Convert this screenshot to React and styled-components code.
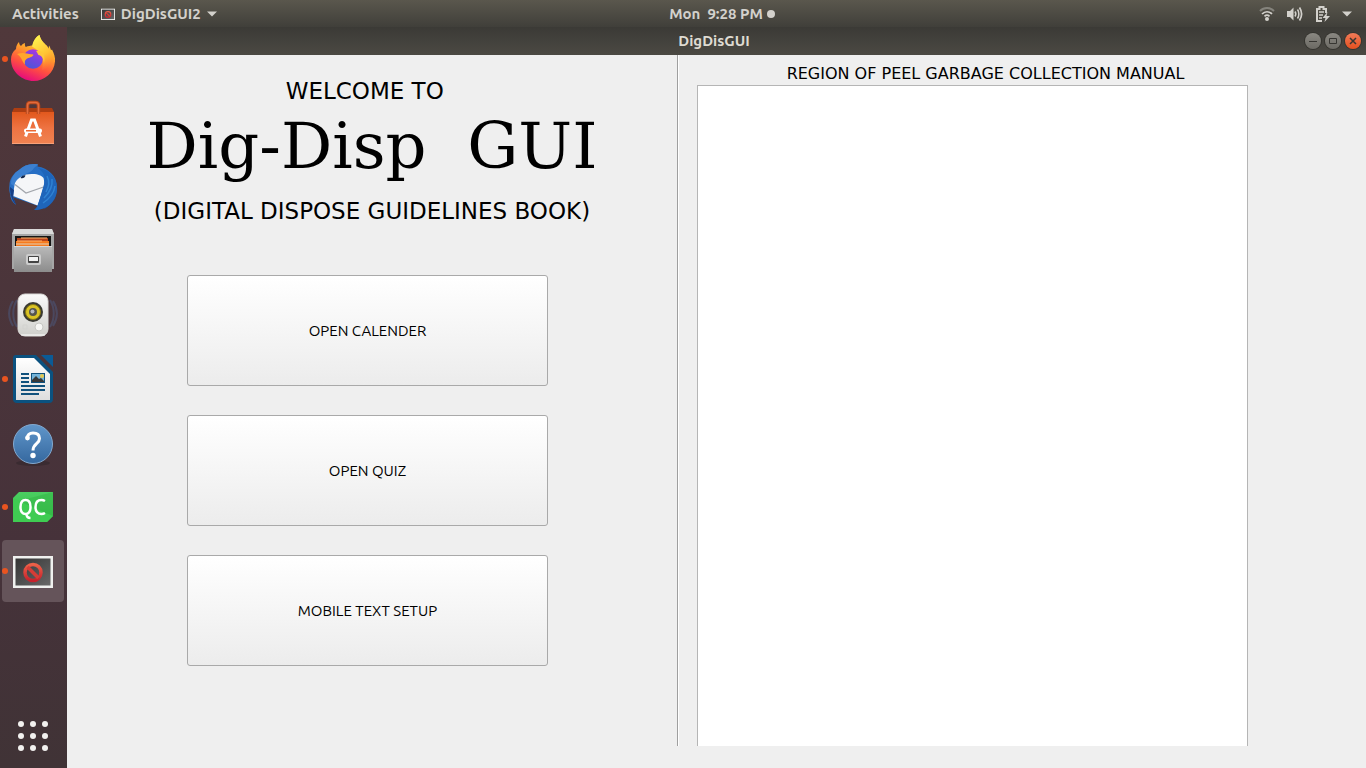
import React from "react";
import styled, { createGlobalStyle } from "styled-components";

const uiFont = `Ubuntu, "Noto Sans", "Open Sans", sans-serif`;
const formFont = `"DejaVu Sans", sans-serif`;

const GlobalStyle = createGlobalStyle`
  *, *::before, *::after { box-sizing: border-box; }
  body { margin: 0; background: #efefef; }
`;

const Desktop = styled.div`
  min-height: 100vh;
  display: flex;
  flex-direction: column;
  background: #efefef;
  font-family: ${uiFont};
`;

const TopBar = styled.header`
  height: 27px;
  flex: none;
  display: grid;
  grid-template-columns: 1fr auto 1fr;
  align-items: center;
  padding: 0 14px 0 12px;
  background: linear-gradient(#5a574d, #403f3a);
`;

const BarGroup = styled.div`
  display: flex;
  align-items: center;
  justify-content: ${(p) => (p.$end ? "flex-end" : "flex-start")};
  gap: ${(p) => p.$gap}px;
`;

const BarButton = styled.button`
  display: flex;
  align-items: center;
  gap: ${(p) => p.$gap || 0}px;
  padding: 0;
  border: 0;
  background: none;
  color: #d3d1cc;
  font: bold 15px/25px ${uiFont};
  white-space: pre;
  svg { display: block; }
`;

const Clock = styled(BarButton)`
  padding-left: 80px;
`;

const Workspace = styled.div`
  flex: 1;
  display: flex;
`;

const Dock = styled.nav`
  width: 67px;
  flex: none;
  display: flex;
  flex-direction: column;
  padding: 0 3px 0 2px;
  background: linear-gradient(#50383b, #46323a 70%, #403336);
`;

const DockItem = styled.button`
  position: relative;
  height: 62px;
  margin: 1px 0;
  padding: 0;
  border: 0;
  border-radius: 4px;
  display: flex;
  align-items: center;
  justify-content: center;
  background: ${(p) => (p.$active ? "#65545a" : "none")};
  svg { display: block; }
  &::before {
    content: "";
    display: ${(p) => (p.$running ? "block" : "none")};
    position: absolute;
    left: 0;
    top: 28px;
    width: 6px;
    height: 6px;
    border-radius: 50%;
    background: #e95420;
  }
`;

const AppsButton = styled(DockItem)`
  margin-top: auto;
`;

const Window = styled.main`
  flex: 1;
  min-width: 0;
  display: flex;
  flex-direction: column;
`;

const TitleBar = styled.div`
  height: 28px;
  flex: none;
  display: grid;
  grid-template-columns: 1fr auto 1fr;
  align-items: center;
  padding-right: 5px;
  background: linear-gradient(#3b3a36, #4b4943);
`;

const WindowTitle = styled.h1`
  grid-column: 2;
  margin: 0;
  color: #dfdbd2;
  font: bold 15px/28px ${uiFont};
`;

const WindowButtons = styled.div`
  display: flex;
  justify-content: flex-end;
  gap: 4px;
`;

const RoundButton = styled.button`
  width: 16px;
  height: 16px;
  padding: 0;
  border: 0;
  border-radius: 50%;
  color: #373632;
  background: ${(p) => (p.$close ? "linear-gradient(#f27b58, #e4501f)" : "linear-gradient(#8a8882, #6c6a64)")};
  box-shadow: 0 0 0 1px #35342f;
  svg { display: block; }
`;

const Content = styled.div`
  flex: 1;
  display: grid;
  grid-template-columns: 610fr 689fr;
  padding-bottom: 22px;
`;

const MenuPane = styled.section`
  min-width: 0;
  padding-top: 16px;
  color: #000;
  font-family: ${formFont};
  text-align: center;
`;

const Caption = styled.p`
  margin: 0;
  font-size: 23px;
  line-height: 40px;
  white-space: pre;
`;

const Brand = styled.h2`
  margin: 0 0 10px;
  font: 64px/70px "DejaVu Serif", serif;
  white-space: pre;
`;

const Actions = styled.div`
  display: flex;
  flex-direction: column;
  gap: 29px;
  margin: 44px 129px 0 120px;
`;

const ActionButton = styled.button`
  height: 111px;
  border: 1px solid #a9a9a9;
  border-radius: 3px;
  background: linear-gradient(#fff, #ececec);
  color: #000;
  font: 15px/20px ${uiFont};
`;

const ManualPane = styled.section`
  min-width: 0;
  display: flex;
  flex-direction: column;
  padding: 6px 118px 0 19px;
  border-left: 1px solid #9f9f9f;
  box-shadow: inset 1px 0 #fff;
`;

const ManualLabel = styled.label`
  margin-right: -26px;
  padding-top: 1px;
  color: #000;
  font: 16px/23px ${formFont};
  text-align: center;
`;

const ManualText = styled.textarea`
  flex: 1;
  display: block;
  width: 100%;
  padding: 4px;
  border: 1px solid #b5b5b5;
  border-bottom: 0;
  background: #fff;
  resize: none;
  outline: none;
  font: 16px/20px ${formFont};
`;

const Caret = () => (
  <svg width="10" height="6" viewBox="0 0 10 6"><path d="M0 .5h10L5 5.5z" fill="#d3d1cc" /></svg>
);

const Firefox = () => (
  <svg width="48" height="48" viewBox="0 1 48 48">
    <defs>
      <linearGradient id="ffBody" x1=".8" y1="0" x2=".4" y2="1">
        <stop offset="0" stopColor="#fff04a" /><stop offset=".4" stopColor="#ffa02b" />
        <stop offset=".7" stopColor="#ff5040" /><stop offset="1" stopColor="#e60c7c" />
      </linearGradient>
      <linearGradient id="ffTail" x1=".3" y1="0" x2=".7" y2="1">
        <stop offset="0" stopColor="#fff44f" /><stop offset=".6" stopColor="#ffc233" /><stop offset="1" stopColor="#ff8a2a" stopOpacity="0" />
      </linearGradient>
      <linearGradient id="ffGlobe" x1=".8" y1="0" x2=".3" y2="1">
        <stop offset="0" stopColor="#b833e1" /><stop offset=".5" stopColor="#7445e0" /><stop offset="1" stopColor="#4b57d8" />
      </linearGradient>
    </defs>
    <path d="M7 15c0-3 1.500-5.500 3-7 .2 2 .8 3 2 4 1-1.500 2.500-2.600 4-3-.3 1.600 0 3 .8 4 2.200-1 5-1.500 7.200-1.500C24 7 27 3 30.500 1c1 5 4 7.500 7 10.500 1 1.200 1.500 2.200 2 3.500l.5-3.500c1 1.300 1.500 3 2 4.700l1-.7c2 4 3.500 8 3 12C45 39 35.500 47 24.500 47S2 38 2 25.500c0-4.500 1.500-7.500 5-10.500z" fill="url(#ffBody)" />
    <path d="M23 12.500C24 7 27 3 30.500 1c1 5 4 7.500 7 10.500C42 17 44 23 41 30c-2 4-5 6-8 6 2-9 1-18-10-23.500z" fill="url(#ffTail)" />
    <circle cx="24" cy="25" r="9.800" fill="url(#ffGlobe)" />
    <path d="M8 20c4-1.500 8-1 11-.2 2 .5 4 .2 5.500 1-1 2.700-5 2.800-7 4.200-2 1.500-1.800 3.500-1.500 5.500C12.500 27 13 23 8 20z" fill="#ffa62b" />
    <path d="M27 17c6-1 10 4 8 12-.5-5-2.500-7.500-5.500-8-1-1.500-1.500-3-2.500-4z" fill="#ffc63a" />
  </svg>
);

const Software = () => (
  <svg width="48" height="48" viewBox="0 -1 48 48">
    <defs>
      <linearGradient id="bag" x1="0" y1="0" x2="0" y2="1">
        <stop offset="0" stopColor="#e2581d" /><stop offset=".5" stopColor="#ee7342" /><stop offset="1" stopColor="#f08352" />
      </linearGradient>
    </defs>
    <path d="M4 44h40l-2 2H6z" fill="#32272b" opacity=".6" />
    <path d="M5 8h38l2 4H3z" fill="#ad3e12" />
    <path d="M3 12h42v32H3z" fill="url(#bag)" />
    <path d="M3 43h42v1H3z" fill="#f8a179" />
    <path d="M18.500 14V5.500c0-2 1-3 3-3h5c2 0 3 1 3 3V14" fill="none" stroke="#b5471c" strokeWidth="3.500" />
    <path d="M18.500 14V5.500c0-2 1-3 3-3h5c2 0 3 1 3 3V14" fill="none" stroke="#e36b3c" strokeWidth="1.500" />
    <path d="M16.500 36.500 22.500 20h3l6 16.500" fill="none" stroke="#fff" strokeWidth="3" />
    <rect x="15" y="28.500" width="18" height="4.500" rx="2" fill="#fff" /><path d="M17 30h10v1.500H17z" fill="#eb6a35" />
  </svg>
);

const Thunderbird = () => (
  <svg width="48" height="48" viewBox="0 -1 48 48">
    <defs>
      <linearGradient id="bird" x1="0" y1="0" x2="1" y2="1">
        <stop offset="0" stopColor="#2c6cc0" /><stop offset=".6" stopColor="#2270c8" /><stop offset="1" stopColor="#123f88" />
      </linearGradient>
    </defs>
    <path d="M10 6C15 1 22-1 29 .5L28.500 2.500C39 4 48 12 48 23c0 6-1 9-3 13l-1-2c-1 5-5 9-9 11l1-3c-3 3-7 4-11 4l4-4L4 33l3 8C3 38 2 35 1 31l1 1C0 28 0 25 .5 20 1 14 5 9 10 6z" fill="url(#bird)" />
    <path d="M10 6C15 1 22-1 29 .5L25 4c-3 5-8 5-12 8-4 2-6 6-8 10l-3-2c0-6 3-11 8-14z" fill="#3c80d0" />
    <path d="M6 19c3-6 10-9.500 18-9 5 0 9 2 10.500 4 1 3 .7 6 .3 9L28.500 41.500 4.300 32C4.500 28 5 23 6 19z" fill="#f5f6f8" />
    <path d="m6 20.500 11 8.500 17.500-6" fill="none" stroke="#a2a6ac" strokeWidth="1.300" />
    <path d="m1 23 4 3-1 7 3 8C3 37 1 30 1 23z" fill="#183f85" />
    <path d="M29 4c7 5 8 11 5.500 18-2 6-3 12-6 20-1 2-2 3-3 4C40 46 48 36 48 24 48 13 39 5 29 4z" fill="#1f65ba" />
    <path d="M38 12c3 6 2 10-1 16m6-13c1 8-3 14-8 19m11-12c-1 8-6 13-12 17" fill="none" stroke="#3fa0ec" strokeWidth="1.500" opacity=".5" />
    <path d="M11.500 14c1-2 3-3 5-2.500-.5 2-2.500 3.500-5 2.500z" fill="#14284c" />
  </svg>
);

const Files = () => (
  <svg width="48" height="48" viewBox="0 0 48 48">
    <defs>
      <linearGradient id="drawer" x1="0" y1="0" x2="0" y2="1">
        <stop offset="0" stopColor="#bababa" /><stop offset="1" stopColor="#8c8c8c" />
      </linearGradient>
    </defs>
    <path d="M5 2h38l2 5v35H3V7z" fill="#a6a6a6" /><path d="M5 2h38l2 5H3z" fill="#dadada" />
    <path d="M6 9h36v11H6z" fill="#161616" />
    <path d="M8 11h31v9H8z" fill="#b9431b" /><path d="M7 14h33v6H7z" fill="#f57b20" />
    <path d="M12 11h26M8 14h25" stroke="#ffb46b" /><path d="M7 17h33" stroke="#e1d2b8" />
    <path d="M5 19h38v26H5z" fill="url(#drawer)" /><path d="M5 19h38v1H5z" fill="#d7d7d7" />
    <rect x="17" y="27" width="15" height="11" rx="2" fill="#ccc" />
    <rect x="19" y="29" width="11" height="7" rx="1" fill="#444" /><rect x="20" y="30" width="9" height="4" fill="#f3f3f3" />
  </svg>
);

const Speaker = () => (
  <svg width="50" height="48" viewBox="0 0 50 48">
    <defs>
      <linearGradient id="case" x1="0" y1="0" x2="0" y2="1">
        <stop offset="0" stopColor="#fafafa" /><stop offset="1" stopColor="#cfcfcb" />
      </linearGradient>
    </defs>
    <g fill="none" stroke="#4d6594" opacity=".4">
      <path d="M9 9c-5 8-5 19 0 27M5 10c-5 8-5 17 0 25" strokeWidth="2" />
      <path d="M42 9c5 8 5 19 0 27M45 10c5 8 5 17 0 25" strokeWidth="2" />
    </g>
    <rect x="10" y="3" width="30" height="42" rx="7" fill="url(#case)" stroke="#d9d9d6" />
    <path d="M13 44h24" stroke="#fff" />
    <circle cx="25" cy="21" r="10" fill="#3a3a33" />
    <circle cx="25" cy="21" r="7.500" fill="#dac324" stroke="#877810" />
    <circle cx="25" cy="21" r="4" fill="#55554d" /><circle cx="24.500" cy="20.500" r="2" fill="#b4b8be" />
    <circle cx="31" cy="36" r="4" fill="#f7f7f5" stroke="#c8c8c4" />
    <path d="M15 34h4v4h-4z" fill="none" stroke="#d2d2cf" />
  </svg>
);

const Writer = () => (
  <svg width="48" height="48" viewBox="0 0 48 48">
    <defs>
      <linearGradient id="page" x1="0" y1="0" x2="0" y2="1">
        <stop offset="0" stopColor="#fff" /><stop offset="1" stopColor="#dedede" />
      </linearGradient>
    </defs>
    <path d="M7 0h20l17 17v27a4 4 0 0 1-4 4H8a4 4 0 0 1-4-4V3a3 3 0 0 1 3-3z" fill="#0b5280" />
    <path d="M32 0h12v12z" fill="#0b5b96" />
    <path d="M7 3h18l16 16v26H7z" fill="url(#page)" />
    <path d="M12 19h8M12 23h8M12 27h8M12 31h24M12 35h24M12 39h18" stroke="#10517c" strokeWidth="2" />
    <path d="M22 18h14v10H22z" fill="#10517c" /><path d="M23 19h12v8H23z" fill="#75b4d9" />
    <circle cx="33" cy="21" r="2" fill="#e4c850" /><path d="m23 27 0-2 4-4 3 3 2-1 3 3v1z" fill="#383838" />
  </svg>
);

const Help = () => (
  <svg width="48" height="48" viewBox="0 -1 48 48">
    <defs>
      <linearGradient id="disc" x1="0" y1="0" x2="0" y2="1">
        <stop offset="0" stopColor="#6096ca" /><stop offset="1" stopColor="#35689f" />
      </linearGradient>
    </defs>
    <ellipse cx="24" cy="43" rx="17" ry="3" fill="#32272c" opacity=".6" />
    <circle cx="24" cy="24" r="19.500" fill="url(#disc)" stroke="#83a9cf" />
    <path d="M18 18.500c.5-4 3-5.500 6-5.500 4 0 6.500 2 6.500 5.500 0 5.500-6.500 5-6.500 12" fill="none" stroke="#fff" strokeWidth="3" />
    <circle cx="18.500" cy="18" r="2.400" fill="#fff" /><circle cx="24" cy="35.500" r="2.700" fill="#fff" />
  </svg>
);

const QtCreator = () => (
  <svg width="48" height="48" viewBox="0 0 48 48">
    <defs>
      <linearGradient id="qt" x1="0" y1="0" x2="0" y2="1">
        <stop offset="0" stopColor="#4bce61" /><stop offset="1" stopColor="#30bd43" />
      </linearGradient>
    </defs>
    <path d="M10 9h34v24l-6 6H4V15z" fill="url(#qt)" />
    <path d="m4 15 40 18-6 6H4z" fill="#3fcc52" /><path d="m10 18 34 15V9z" fill="#35b748" opacity=".6" />
    <path d="M16.500 17c3.700 0 5 2.500 5 7s-1.300 7-5 7-5-2.500-5-7 1.300-7 5-7zm1 14c0 3 1.500 4 4 4M36 18c-1-.6-2-1-3.500-1-4 0-6 2.500-6 7s2 7 6 7c1.500 0 2.500-.4 3.500-1" fill="none" stroke="#fff" strokeWidth="2.500" />
  </svg>
);

const DigDis = ({ width = 40, height = 34 }) => (
  <svg width={width} height={height} viewBox="0 -2 40 34" preserveAspectRatio="none">
    <defs>
      <linearGradient id="screen" x1="0" y1="0" x2="1" y2="1">
        <stop offset="0" stopColor="#343434" /><stop offset="1" stopColor="#686868" />
      </linearGradient>
      <linearGradient id="deny" x1="0" y1="0" x2="0" y2="1">
        <stop offset="0" stopColor="#ed6048" /><stop offset="1" stopColor="#c5222c" />
      </linearGradient>
    </defs>
    <path d="M0 0h40v32H0z" fill="#f0f1ef" /><path d="M2.500 2.500h35v27h-35z" fill="url(#screen)" />
    <circle cx="20" cy="16.500" r="8" fill="none" stroke="url(#deny)" strokeWidth="3.500" />
    <path d="m14.500 11 11 11" stroke="#d63c36" strokeWidth="3.500" />
  </svg>
);

const AppsGrid = () => (
  <svg width="30" height="30" viewBox="0 0 30 30" fill="#f2f1ef">
    {[3, 15, 27].map((y) => [3, 15, 27].map((x) => <circle key={`${x}-${y}`} cx={x} cy={y} r="3" />))}
  </svg>
);

const Wifi = () => (
  <svg width="16" height="16" viewBox="0 0 16 16" fill="none" stroke="#d3d1cc" strokeWidth="2">
    <path d="M1 5c4-4 10-4 14 0" opacity=".4" />
    <path d="M3 8c3-3 7-3 10 0M5.500 10.300c1.500-1.400 3.500-1.400 5 0" strokeWidth="1.700" />
    <circle cx="8" cy="13" r="2" fill="#d3d1cc" stroke="none" />
  </svg>
);

const Volume = () => (
  <svg width="16" height="16" viewBox="0 0 16 16" fill="none" stroke="#d3d1cc" strokeWidth="2">
    <path d="M0 5h3l3.500-3.500v13L3 11H0z" fill="#d3d1cc" stroke="none" />
    <path d="M8 5.500c1 1.500 1 3.500 0 5" strokeWidth="1.500" /><path d="M10.500 3.500c1.800 2.500 1.800 6.500 0 9" strokeWidth="1.500" /><path d="M12.500 1.500c2.600 4 2.600 9 0 13" strokeWidth="1.700" />
  </svg>
);

const Battery = () => (
  <svg width="15" height="16" viewBox="0 0 15 16" fill="none" stroke="#d3d1cc">
    <path d="M7 15H2V3h2.500V1h4v2H11v4" strokeWidth="2" />
    <path d="M4 6h5M4 9h4M4 12h3" strokeWidth="1.500" />
    <path d="m12.500 6-5 6h3l-1 4 5.500-6h-3.500z" fill="#d3d1cc" stroke="none" />
  </svg>
);

const dockApps = [
  { name: "Firefox", Icon: Firefox, running: true },
  { name: "Ubuntu Software", Icon: Software },
  { name: "Thunderbird", Icon: Thunderbird },
  { name: "Files", Icon: Files },
  { name: "Rhythmbox", Icon: Speaker },
  { name: "LibreOffice Writer", Icon: Writer, running: true },
  { name: "Help", Icon: Help },
  { name: "Qt Creator", Icon: QtCreator, running: true },
  { name: "DigDisGUI2", Icon: DigDis, running: true, active: true },
];

export default function App() {
  return (
    <Desktop>
      <GlobalStyle />
      <TopBar>
        <BarGroup $gap={22}>
          <BarButton>Activities</BarButton>
          <BarButton $gap={6}>
            <DigDis width={14} height={12} />
            <span>DigDisGUI2</span>
            <Caret />
          </BarButton>
        </BarGroup>
        <Clock $gap={4}>
          <span>{"Mon  9:28 PM"}</span>
          <svg width="8" height="8" viewBox="0 0 8 8"><circle cx="4" cy="4" r="4" fill="#d3d1cc" /></svg>
        </Clock>
        <BarGroup $end $gap={12}>
          <BarButton aria-label="Network"><Wifi /></BarButton>
          <BarButton aria-label="Volume"><Volume /></BarButton>
          <BarButton aria-label="Battery"><Battery /></BarButton>
          <BarButton aria-label="System menu"><Caret /></BarButton>
        </BarGroup>
      </TopBar>
      <Workspace>
        <Dock aria-label="Dock">
          {dockApps.map(({ name, Icon, running, active }) => (
            <DockItem key={name} aria-label={name} $running={running} $active={active}><Icon /></DockItem>
          ))}
          <AppsButton aria-label="Show Applications"><AppsGrid /></AppsButton>
        </Dock>
        <Window>
          <TitleBar>
            <WindowTitle>DigDisGUI</WindowTitle>
            <WindowButtons>
              <RoundButton aria-label="Minimize">
                <svg width="16" height="16" viewBox="0 0 16 16"><path d="M4 8.500h8" stroke="currentColor" /></svg>
              </RoundButton>
              <RoundButton aria-label="Maximize">
                <svg width="16" height="16" viewBox="0 0 16 16"><path d="M4.500 5.500h7v5h-7z" fill="none" stroke="currentColor" /></svg>
              </RoundButton>
              <RoundButton $close aria-label="Close">
                <svg width="16" height="16" viewBox="0 0 16 16"><path d="m5 5 6 6M11 5l-6 6" stroke="currentColor" strokeWidth="1.500" /></svg>
              </RoundButton>
            </WindowButtons>
          </TitleBar>
          <Content>
            <MenuPane>
              <Caption>{"WELCOME TO  "}</Caption>
              <Brand>{"Dig-Disp  GUI"}</Brand>
              <Caption>(DIGITAL DISPOSE GUIDELINES BOOK)</Caption>
              <Actions>
                <ActionButton>OPEN CALENDER</ActionButton>
                <ActionButton>OPEN QUIZ</ActionButton>
                <ActionButton>MOBILE TEXT SETUP</ActionButton>
              </Actions>
            </MenuPane>
            <ManualPane>
              <ManualLabel htmlFor="manual">REGION OF PEEL GARBAGE COLLECTION MANUAL</ManualLabel>
              <ManualText id="manual" readOnly />
            </ManualPane>
          </Content>
        </Window>
      </Workspace>
    </Desktop>
  );
}
